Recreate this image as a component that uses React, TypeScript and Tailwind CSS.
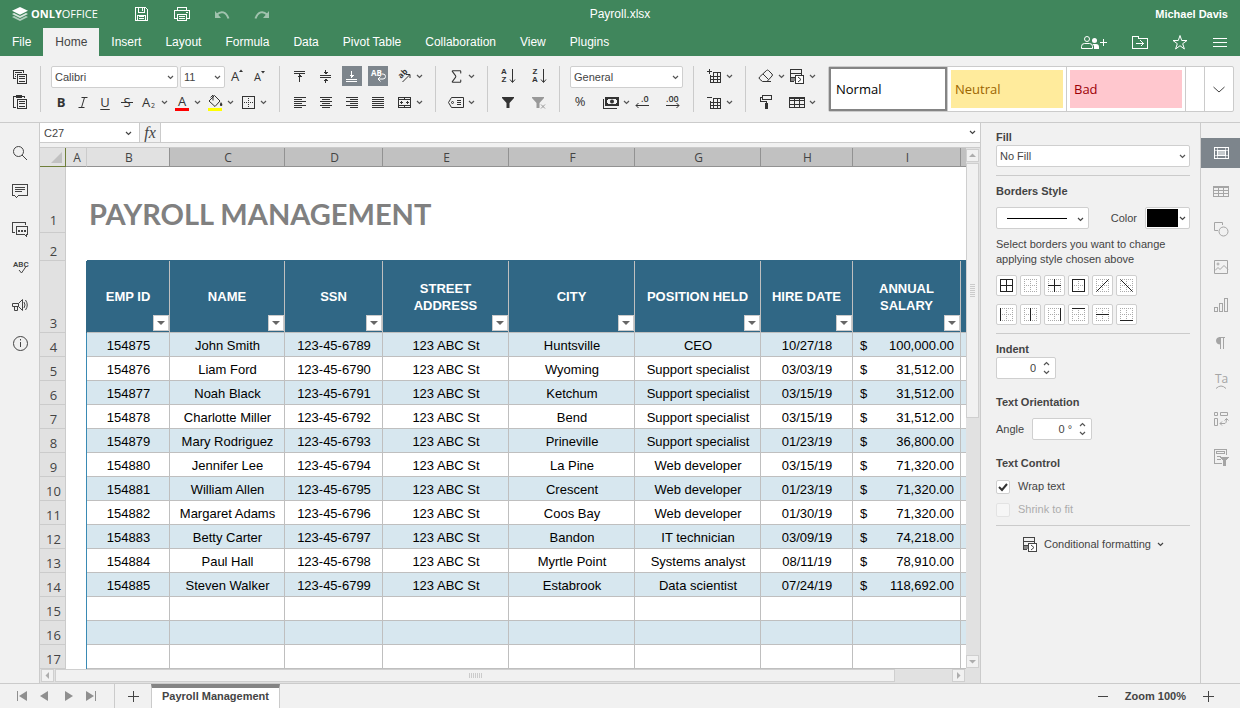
import React, { useState } from 'react';
import { Sigma } from 'lucide-react';
import { clsx } from 'clsx';

const columns = [
  { letter: 'A', width: 'w-[21px]', selected: false },
  { letter: 'B', width: 'w-[83px]', selected: false },
  { letter: 'C', width: 'w-[115px]', selected: true },
  { letter: 'D', width: 'w-[98px]', selected: true },
  { letter: 'E', width: 'w-[126px]', selected: true },
  { letter: 'F', width: 'w-[126px]', selected: true },
  { letter: 'G', width: 'w-[126px]', selected: true },
  { letter: 'H', width: 'w-[92px]', selected: true },
  { letter: 'I', width: 'w-[108px]', selected: true },
  { letter: '', width: '', selected: true },
];

const headings = [
  'EMP ID', 'NAME', 'SSN', 'STREET ADDRESS', 'CITY', 'POSITION HELD', 'HIRE DATE', 'ANNUAL SALARY',
];

const employees = [
  ['154875', 'John Smith', '123-45-6789', '123 ABC St', 'Huntsville', 'CEO', '10/27/18', '100,000.00'],
  ['154876', 'Liam Ford', '123-45-6790', '123 ABC St', 'Wyoming', 'Support specialist', '03/03/19', '31,512.00'],
  ['154877', 'Noah Black', '123-45-6791', '123 ABC St', 'Ketchum', 'Support specialist', '03/15/19', '31,512.00'],
  ['154878', 'Charlotte Miller', '123-45-6792', '123 ABC St', 'Bend', 'Support specialist', '03/15/19', '31,512.00'],
  ['154879', 'Mary Rodriguez', '123-45-6793', '123 ABC St', 'Prineville', 'Support specialist', '01/23/19', '36,800.00'],
  ['154880', 'Jennifer Lee', '123-45-6794', '123 ABC St', 'La Pine', 'Web developer', '03/15/19', '71,320.00'],
  ['154881', 'William Allen', '123-45-6795', '123 ABC St', 'Crescent', 'Web developer', '01/23/19', '71,320.00'],
  ['154882', 'Margaret Adams', '123-45-6796', '123 ABC St', 'Coos Bay', 'Web developer', '01/30/19', '71,320.00'],
  ['154883', 'Betty Carter', '123-45-6797', '123 ABC St', 'Bandon', 'IT technician', '03/09/19', '74,218.00'],
  ['154884', 'Paul Hall', '123-45-6798', '123 ABC St', 'Myrtle Point', 'Systems analyst', '08/11/19', '78,910.00'],
  ['154885', 'Steven Walker', '123-45-6799', '123 ABC St', 'Estabrook', 'Data scientist', '07/24/19', '118,692.00'],
  [], [], [],
];

const tabs = [
  'File', 'Home', 'Insert', 'Layout', 'Formula', 'Data', 'Pivot Table', 'Collaboration', 'View', 'Plugins',
];

interface IconProps {
  children: React.ReactNode;
  smooth?: boolean;
  className?: string;
}

// 20x20 line icon, strokes sit on half pixels
const Icon: React.FC<IconProps> = ({ children, smooth, className }) => (
  <svg
    viewBox="0 0 20 20"
    fill="none"
    stroke="currentColor"
    shapeRendering={smooth ? 'auto' : 'crispEdges'}
    className={clsx('w-5 h-5 shrink-0', className)}
    aria-hidden="true"
  >
    {children}
  </svg>
);

const Caret: React.FC<{ className?: string }> = ({ className }) => (
  <svg viewBox="0 0 7 5" fill="none" stroke="currentColor" className={clsx('w-[7px] h-[5px] shrink-0 pointer-events-none', className)} aria-hidden="true">
    <path d="M1 1l2.5 2.5L6 1" strokeWidth="1.2" />
  </svg>
);

interface ToolProps {
  label: string;
  children: React.ReactNode;
  active?: boolean;
  menu?: boolean;
}

const Tool: React.FC<ToolProps> = ({ label, children, active, menu }) => (
  <button
    aria-label={label}
    className={clsx('flex items-center shrink-0 h-5', active ? 'bg-[#7d858c] text-white' : 'text-[#333]')}
  >
    <span className="w-5 h-5 flex items-center justify-center">{children}</span>
    {menu && <span className="w-[11px] flex justify-center text-[#555]"><Caret /></span>}
  </button>
);

const Group: React.FC<{ children: React.ReactNode; last?: boolean }> = ({ children, last }) => (
  <div className={clsx('flex flex-col justify-between px-[10px] shrink-0', !last && 'border-r border-[#cbcbcb]')}>
    {children}
  </div>
);

interface ComboProps {
  label: string;
  id?: string;
  options: string[];
  className?: string;
}

const Combo: React.FC<ComboProps> = ({ label, id, options, className }) => (
  <div className={clsx('relative h-[22px]', className)}>
    <select
      id={id}
      aria-label={label}
      className="appearance-none block w-full h-full bg-white border border-[#cfcfcf] rounded-[2px] pl-[3px] pr-4 text-[11px] text-[#444] outline-none"
    >
      {options.map(option => <option key={option}>{option}</option>)}
    </select>
    <Caret className="absolute right-1 top-[9px] text-[#555]" />
  </div>
);

const Spinner: React.FC<{ id: string; value: string }> = ({ id, value }) => (
  <div className="flex w-[60px] h-[22px] bg-white border border-[#cfcfcf] rounded-[2px]">
    <input id={id} defaultValue={value} className="w-10 pr-px text-right text-[11px] outline-none" />
    <div className="flex flex-col justify-between flex-1 items-center py-[3px] text-[#555]">
      <button aria-label="Increase" className="h-[5px] flex"><Caret className="rotate-180" /></button>
      <button aria-label="Decrease" className="h-[5px] flex"><Caret /></button>
    </div>
  </div>
);

const CopyIcon = () => (
  <Icon>
    <path d="M6 12.5H3.5v-8h10V7M5 6.5h7M5 8.5h1M5 10.5h1M7.5 8.5h9v9h-9zM9 10.5h6M9 12.5h6M9 15.5h6" />
  </Icon>
);

const PasteIcon = () => (
  <Icon>
    <path d="M6 15.5H3.5v-11H6M12 4.5h2.5V6M7.5 7.5h9v9h-9zM9 9.5h6M9 11.5h6M9 14.5h6" />
    <path d="M6 3h6v3H6z" fill="currentColor" stroke="none" />
  </Icon>
);

const FillIcon = () => (
  <Icon smooth>
    <path d="M9.5 3.5L15 9l-5 5.5L4 9zM8 8.5V3L5.5 5.5" />
    <path d="M16 10c2 2.5 1.5 4 0 4s-1.5-2 0-4z" fill="currentColor" stroke="none" />
    <path d="M3 16h14v3H3z" fill="#ff0" stroke="none" />
  </Icon>
);

const CellsIcon: React.FC<{ plus?: boolean }> = ({ plus }) => (
  <Icon>
    <path d={plus ? 'M3 5.5h5M5.5 3v5' : 'M3 5.5h5'} />
    <path d="M6.5 9v7.5h10v-10H9M6 10.5h11M6 13.5h11M9.5 6v11M13.5 6v11" />
  </Icon>
);

const ConditionalIcon = () => (
  <Icon>
    <path d="M7 15.5H3.5v-12h11V9M3 7.5h12M3 11.5h5" />
    <path d="M4 12h4v3H4z" fill="#888" stroke="none" />
    <path d="M8.5 9.5h8v8h-8z" fill="#fff" />
    <path d="M11 11l3 2.5L11 16" shapeRendering="auto" />
  </Icon>
);

const SortIcon: React.FC<{ top: string; bottom: string }> = ({ top, bottom }) => (
  <span className="flex items-center w-5 h-5">
    <span className="flex flex-col w-[9px] pl-[3px] text-[8px] leading-2 font-bold">
      <span>{top}</span>
      <span>{bottom}</span>
    </span>
    <svg viewBox="0 0 8 16" fill="none" stroke="currentColor" className="w-2 h-4 ml-px" aria-hidden="true">
      <path d="M4.5 1v13M2 11.5l2.5 3 2.5-3" />
    </svg>
  </span>
);

const Toolbar = () => (
  <div className="flex shrink-0 bg-[#f1f1f1] border-b border-[#cbcbcb] pt-[10px] pb-[10px] pr-[6px] h-[67px] overflow-hidden">
    <Group>
      <Tool label="Copy"><CopyIcon /></Tool>
      <Tool label="Paste"><PasteIcon /></Tool>
    </Group>

    <Group>
      <div className="flex">
        <Combo label="Font" options={['Calibri', 'Arial']} className="w-[127px] mr-[2px]" />
        <Combo label="Font size" options={['11', '12', '14']} className="w-[45px]" />
        <div className="flex gap-[3px] pl-px">
          <Tool label="Increase font size">
            <Icon smooth>
              <text x="5" y="15" fontSize="13" fill="currentColor" stroke="none" className="font-['Open_Sans',sans-serif]">A</text>
              <path d="M13 6l2-2.5L17 6z" fill="currentColor" stroke="none" />
            </Icon>
          </Tool>
          <Tool label="Decrease font size">
            <Icon smooth>
              <text x="5" y="15" fontSize="11" fill="currentColor" stroke="none" className="font-['Open_Sans',sans-serif]">A</text>
              <path d="M12 5l2 2.5L16 5z" fill="currentColor" stroke="none" />
            </Icon>
          </Tool>
        </div>
      </div>
      <div className="flex gap-[2px] font-['Open_Sans',sans-serif] text-[13px] leading-5">
        <Tool label="Bold"><b>B</b></Tool>
        <Tool label="Italic">
          <Icon smooth><path d="M8.5 5.5h6M5.5 15.5h6M11.5 5.5l-3 10" /></Icon>
        </Tool>
        <Tool label="Underline"><u className="underline-offset-2">U</u></Tool>
        <Tool label="Strikethrough">
          <Icon smooth>
            <text x="10" y="15" textAnchor="middle" fontSize="13" fill="currentColor" stroke="none">S</text>
            <path d="M4 10.5h12" />
          </Icon>
        </Tool>
        <Tool label="Subscript" menu>
          <Icon smooth>
            <text x="3" y="15" fontSize="13" fill="currentColor" stroke="none">A</text>
            <text x="12" y="16" fontSize="7" fill="currentColor" stroke="none">2</text>
          </Icon>
        </Tool>
        <Tool label="Font color" menu>
          <Icon smooth>
            <text x="10" y="14" textAnchor="middle" fontSize="13" fill="currentColor" stroke="none">A</text>
            <path d="M3 16h14v3H3z" fill="red" stroke="none" />
          </Icon>
        </Tool>
        <Tool label="Fill color" menu><FillIcon /></Tool>
        <Tool label="Borders" menu>
          <Icon>
            <path d="M4.5 4.5h12v12h-12z" />
            <path d="M10.5 6v10M6 10.5h10" strokeDasharray="1 1" />
          </Icon>
        </Tool>
      </div>
    </Group>

    <Group>
      <div className="flex gap-[6px]">
        <Tool label="Align top"><Icon><path d="M4 5.5h11M4 7.5h11M9.5 8v8M7.5 10.5h4M8.5 9.5h2" /></Icon></Tool>
        <Tool label="Align middle">
          <Icon><path d="M4 9.5h11M4 11.5h11M9.5 4v4M9.5 13v4M7.5 6.5h4M8.5 7.5h2M7.5 14.5h4M8.5 13.5h2" /></Icon>
        </Tool>
        <Tool label="Align bottom" active>
          <Icon><path d="M4 13.5h11M4 15.5h11M9.5 5v7M7.5 9.5h4M8.5 10.5h2" /></Icon>
        </Tool>
        <Tool label="Wrap text" active>
          <Icon smooth>
            <text x="3" y="10" fontSize="8" fontWeight="700" fill="currentColor" stroke="none" className="font-['Open_Sans',sans-serif]">AB</text>
            <path d="M14 8h1q2.5 0 2.5 2.5T15 13h-5M12.5 10.5L10 13l2.5 2.5" />
          </Icon>
        </Tool>
        <Tool label="Orientation" menu>
          <Icon smooth>
            <text x="0" y="0" transform="translate(7 13) rotate(-45)" fontSize="8" fontWeight="700" fill="currentColor" stroke="none" className="font-['Open_Sans',sans-serif]">ab</text>
            <path d="M8.5 16l7-7M12 8.5h4V12" />
          </Icon>
        </Tool>
      </div>
      <div className="flex gap-[6px]">
        <Tool label="Align left"><Icon><path d="M4 5.5h12M4 7.5h8M4 9.5h12M4 11.5h8M4 13.5h12M4 15.5h8" /></Icon></Tool>
        <Tool label="Align center"><Icon><path d="M4 5.5h12M6 7.5h8M4 9.5h12M6 11.5h8M4 13.5h12M6 15.5h8" /></Icon></Tool>
        <Tool label="Align right"><Icon><path d="M4 5.5h12M8 7.5h8M4 9.5h12M8 11.5h8M4 13.5h12M8 15.5h8" /></Icon></Tool>
        <Tool label="Justify"><Icon><path d="M4 5.5h12M4 7.5h12M4 9.5h12M4 11.5h12M4 13.5h12M4 15.5h12" /></Icon></Tool>
        <Tool label="Merge" menu>
          <Icon>
            <path d="M4.5 5.5h12v10h-12zM4 7.5h13M4 13.5h13M10.5 5v3M10.5 13v3M6 10.5h3M12 10.5h3M7.5 9v3M13.5 9v3" />
          </Icon>
        </Tool>
      </div>
    </Group>

    <Group>
      <Tool label="Sum" menu><Sigma size={17} strokeWidth={1.5} /></Tool>
      <Tool label="Named ranges" menu>
        <Icon smooth>
          <path d="M5.5 5.5h12v10h-12l-3-5z" />
          <circle cx="6.5" cy="10.5" r="1" />
          <path d="M11 8.5h4M11 10.5h4M11 12.5h4" />
        </Icon>
      </Tool>
    </Group>

    <Group>
      <div className="flex gap-[11px]">
        <Tool label="Sort ascending"><SortIcon top="A" bottom="Z" /></Tool>
        <Tool label="Sort descending"><SortIcon top="Z" bottom="A" /></Tool>
      </div>
      <div className="flex gap-[11px]">
        <Tool label="Filter"><Icon smooth><path d="M4 5h12v1l-4.500 5v5h-3v-5L4 6z" fill="currentColor" stroke="none" /></Icon></Tool>
        <Tool label="Clear filter">
          <Icon smooth className="text-[#999]">
            <path d="M3 5h12v1l-4.500 5v5h-3v-5L3 6z" fill="currentColor" stroke="none" />
            <path d="M12 12.5l4 4M16 12.5l-4 4" />
          </Icon>
        </Tool>
      </div>
    </Group>

    <Group>
      <Combo label="Number format" options={['General', 'Number', 'Date']} className="w-[113px]" />
      <div className="flex justify-between font-['Open_Sans',sans-serif]">
        <Tool label="Percent"><span className="text-[13px]">%</span></Tool>
        <div className="flex">
          <Tool label="Currency" menu>
            <Icon>
              <path d="M2.5 7v9.5H16" />
              <path d="M4 5h14v9H4z" fill="currentColor" stroke="none" />
              <path d="M7 7h8v1h1v3h-1v1H7v-1H6V8h1z" fill="#f1f1f1" stroke="none" />
              <circle cx="11" cy="9.5" r="2" fill="currentColor" stroke="none" shapeRendering="auto" />
            </Icon>
          </Tool>
          <Tool label="Decrease decimal">
            <Icon smooth>
              <text x="9" y="10" fontSize="9" fontWeight="600" fill="currentColor" stroke="none">.0</text>
              <path d="M4 13.5h13M6.5 11L4 13.5 6.5 16" />
            </Icon>
          </Tool>
        </div>
        <Tool label="Increase decimal">
          <Icon smooth>
            <text x="3" y="10" fontSize="9" fontWeight="600" fill="currentColor" stroke="none">.00</text>
            <path d="M3 13.5h13M13.5 11l2.5 2.5-2.5 2.5" />
          </Icon>
        </Tool>
      </div>
    </Group>

    <Group>
      <Tool label="Insert cells" menu><CellsIcon plus /></Tool>
      <Tool label="Delete cells" menu><CellsIcon /></Tool>
    </Group>

    <Group last>
      <div className="flex">
        <Tool label="Clear" menu>
          <Icon smooth>
            <path d="M3.5 11l7-6.5q1-1 2 0L16 8q1 1 0 2l-5 5.5H6.5L3.5 13q-.8-1 0-2zM7 8l5.5 5.5M10 15.5h5" />
          </Icon>
        </Tool>
        <Tool label="Conditional formatting" menu><ConditionalIcon /></Tool>
      </div>
      <div className="flex gap-[11px]">
        <Tool label="Copy style">
          <Icon>
            <path d="M6.5 3.5h9v4h-9zM6 5.5H4.5v4h6V12" />
            <path d="M9 11h3v6H9z" fill="currentColor" stroke="none" />
          </Icon>
        </Tool>
        <Tool label="Format as table" menu>
          <Icon>
            <path d="M2.5 5.5h15v10h-15zM2 8.5h16M2 12.5h16M7.5 5v11M12.5 5v11" />
            <path d="M2 5h16v2H2z" fill="currentColor" stroke="none" />
          </Icon>
        </Tool>
      </div>
    </Group>

    <div className="flex flex-1 bg-white border border-[#cbcbcb] rounded-[2px] font-['Open_Sans',sans-serif] text-[13px]">
      <button className="w-[118px] shrink-0 border-2 border-[#848484] text-left pl-[5px] pt-px text-black">Normal</button>
      <div className="w-[120px] shrink-0 border-x border-[#cbcbcb] p-[3px]">
        <button className="w-full h-full bg-[#ffeb9c] text-[#9c6500] text-left pl-1 pt-px">Neutral</button>
      </div>
      <div className="w-[119px] shrink-0 border-r border-[#cbcbcb] p-[3px]">
        <button className="w-full h-full bg-[#ffc7ce] text-[#9c0006] text-left pl-1 pt-px">Bad</button>
      </div>
      <div className="flex-1" />
      <button aria-label="More styles" className="w-[29px] shrink-0 border-l border-[#cbcbcb] flex items-center justify-center text-[#444]">
        <Icon smooth><path d="M4.5 8l5.5 5 5.5-5" /></Icon>
      </button>
    </div>
  </div>
);

const Header: React.FC = () => {
  const [active, setActive] = useState('Home');

  return (
    <header className="bg-[#40865c] text-white text-xs shrink-0">
      <div className="relative flex items-center justify-between h-7 px-3">
        <div className="flex items-center">
          <svg viewBox="0 0 16 14" className="w-4 h-[14px]" aria-hidden="true">
            <path d="M0 10l2-1 6 3 6-3 2 1-8 4z" fill="#fff" opacity=".6" />
            <path d="M0 7l2-1 6 3 6-3 2 1-8 4z" fill="#fff" opacity=".8" />
            <path d="M8 0l8 3.8-8 3.9L0 3.8z" fill="#fff" />
          </svg>
          <span className="ml-[3px] w-[69px] font-['Open_Sans',sans-serif] text-[11px]"><b>ONLY</b>OFFICE</span>
          <div className="flex gap-5 pl-[31px]">
            <button aria-label="Save">
              <Icon><path d="M4.5 3.5h10l2 2v11h-12zM7.5 4v4h6V4M11.5 4v3M6.5 16v-5h8v5M8 12.5h5M8 14.5h5" /></Icon>
            </button>
            <button aria-label="Print">
              <Icon><path d="M7 14.5H3.5v-8h15v8H15M6.5 6V3.5h9V6M6.5 10.5h9v6h-9zM8 12.5h6M8 14.5h6M15 8.5h2" /></Icon>
            </button>
            <button aria-label="Undo" className="opacity-50">
              <Icon smooth><path d="M6 10.5c4-4 9-3 11.5 4" strokeWidth="2" /><path d="M4 7v7h6z" fill="currentColor" stroke="none" /></Icon>
            </button>
            <button aria-label="Redo" className="opacity-50">
              <Icon smooth><path d="M16 10.5c-4-4-9-3-11.5 4" strokeWidth="2" /><path d="M18 7v7h-6z" fill="currentColor" stroke="none" /></Icon>
            </button>
          </div>
        </div>
        <span className="absolute left-1/2 -translate-x-1/2">Payroll.xlsx</span>
        <span className="text-[11px] font-bold">Michael Davis</span>
      </div>

      <div className="flex justify-between h-7">
        <nav className="flex">
          {tabs.map(tab => (
            <button
              key={tab}
              onClick={() => setActive(tab)}
              className={clsx('px-3', tab === active && 'bg-[#f1f1f1] text-[#444]')}
            >
              {tab}
            </button>
          ))}
        </nav>
        <div className="flex items-center gap-5 pr-[10px]">
          <button aria-label="Manage access">
            <svg viewBox="0 0 28 20" fill="none" stroke="currentColor" className="w-7 h-5 mr-[2px]" aria-hidden="true">
              <circle cx="7" cy="7" r="2.5" />
              <path d="M1.5 16.5v-2q0-3 3-3h5q3 0 3 3v2z" />
              <circle cx="14.5" cy="8.5" r="2.5" fill="currentColor" stroke="none" />
              <path d="M14 17v-3l-1.5-2H16q3 0 3 3v2z" fill="currentColor" stroke="none" />
              <path d="M20 10.5h7M23.5 7v7" />
            </svg>
          </button>
          <button aria-label="Open file location">
            <Icon><path d="M2.5 16.5v-12h6v2h9v10zM6 11.5h7M10.5 8.5l3 3-3 3" /></Icon>
          </button>
          <button aria-label="Mark as favorite">
            <Icon smooth><path d="M10 3.5l1.7 5H17l-4.300 3.200 1.700 5.300-4.400-3.300L5.600 17l1.700-5.300L3 8.500h5.300z" /></Icon>
          </button>
          <button aria-label="View settings">
            <Icon><path d="M3 6.5h14M3 10.5h14M3 14.5h14" /></Icon>
          </button>
        </div>
      </div>
    </header>
  );
};

const leftTools = [
  { label: 'Search', icon: <Icon smooth><circle cx="8.5" cy="8.5" r="5" /><path d="M12 12l5 5" /></Icon> },
  { label: 'Comments', icon: <Icon><path d="M2.5 3.5h15v11h-9l-2 2-2-2h-2zM5 6.5h10M5 8.5h10M5 10.5h7" /></Icon> },
  {
    label: 'Chat',
    icon: (
      <Icon>
        <path d="M5 13.5H2.5v-10h13V6M6.5 7.5h11v8h-1v2l-2-2h-8z" />
        <path d="M8 11h2v2H8zM11 11h2v2h-2zM14 11h2v2h-2z" fill="currentColor" stroke="none" />
      </Icon>
    ),
  },
  {
    label: 'Spell checking',
    icon: (
      <Icon smooth>
        <text x="3" y="10" fontSize="8" fontWeight="600" fill="currentColor" stroke="none" className="font-['Roboto',sans-serif]">ABC</text>
        <path d="M9 13l2.5 3L16 9.5" />
      </Icon>
    ),
  },
  { label: 'Feedback', icon: <Icon smooth><path d="M2.5 8.5h6l4-4v11l-4-4h-6zM4.5 12v3.5h3V12M8.5 8.5v3M14 7q2 3 0 6M15.5 5q3.5 5 0 10" /></Icon> },
  { label: 'About', icon: <Icon smooth><circle cx="10.5" cy="10.5" r="7" /><path d="M10.5 9v5M10.5 6v1.5" /></Icon> },
];

const rightTools = [
  {
    label: 'Cell settings',
    icon: (
      <Icon>
        <path d="M3.5 4.5h14v11h-14zM6.5 4v12M14.5 4v12M3 7.5h15M3 12.5h15" opacity=".6" />
        <path d="M3.5 4.5h14v11h-14zM6.5 7.5h8v5h-8z" />
        <path d="M7 8h7v4H7z" fill="#c5cacd" stroke="none" />
      </Icon>
    ),
  },
  { label: 'Table settings', icon: <Icon><path d="M2.5 5.5h15v10h-15zM2 6.5h16M2 9.5h16M2 12.5h16M7.5 6v10M12.5 6v10" /></Icon> },
  { label: 'Shape settings', icon: <Icon smooth><path d="M7 11.5H3.5v-8h8V6" /><circle cx="12.5" cy="12.5" r="4.5" /></Icon> },
  { label: 'Image settings', icon: <Icon smooth><path d="M3.5 3.5h13v13h-13zM4 13.5l3-3 2 2 4-4 4 4" /><circle cx="7" cy="7" r="1" /></Icon> },
  { label: 'Chart settings', icon: <Icon><path d="M3.5 12.5h3v4h-3zM8.5 8.5h3v8h-3zM13.5 3.5h3v13h-3z" /></Icon> },
  {
    label: 'Paragraph settings',
    icon: (
      <Icon smooth>
        <path d="M9.5 4v7.5q-4.5 0-4.5-3.7T9.5 4z" fill="currentColor" stroke="none" />
        <path d="M8 4.5h6M9.5 4v12M12.5 4v12" />
      </Icon>
    ),
  },
  {
    label: 'Text Art settings',
    icon: (
      <Icon smooth>
        <text x="4" y="12" fontSize="12" fill="currentColor" stroke="none" className="font-['Open_Sans',sans-serif]">Ta</text>
        <path d="M5 17.5q5-5 10 0" />
      </Icon>
    ),
  },
  {
    label: 'Pivot table settings',
    icon: <Icon smooth><path d="M3.5 3.5h3v3h-3zM9.5 3.5h7v3h-7zM3.5 9.5h3v7h-3zM9 14.5h5q1.5 0 1.5-5M13.5 11.5l2-2 2 2M11 12.5l-2 2 2 2" /></Icon>,
  },
  {
    label: 'Slicer settings',
    icon: (
      <Icon>
        <path d="M11 16.5H3.5v-14h12V8M5.5 4.5h8v2h-8zM6 9.5h4M6 12.5h4" />
        <path d="M9 10h9l-3 4v5h-3v-5z" fill="currentColor" stroke="none" />
      </Icon>
    ),
  },
];

const FormulaBar = () => (
  <div className="flex h-5 shrink-0 bg-white border-b border-[#cbcbcb] text-[#444]">
    <div className="relative w-[100px] shrink-0 border-r border-[#cbcbcb]">
      <input aria-label="Name box" defaultValue="C27" className="block w-full h-full pl-1 text-[11px] outline-none" />
      <Caret className="absolute right-[7px] top-2" />
    </div>
    <button aria-label="Insert function" className="w-[21px] shrink-0 bg-[#f1f1f1] border-r border-[#cbcbcb] font-['Liberation_Serif',serif] italic text-base leading-[18px]">
      fx
    </button>
    <input aria-label="Formula" className="flex-1 min-w-0 px-1 text-[11px] outline-none" />
    <button aria-label="Expand formula bar" className="w-4 flex items-center justify-center"><Caret /></button>
  </div>
);

const RowNumber: React.FC<{ n: number; className?: string }> = ({ n, className }) => (
  <th
    scope="row"
    className={clsx(
      "bg-[#e1e1e1] border-r border-b border-[#cbcbcb] p-0 pl-[2px] align-bottom text-center font-normal text-[#444] text-[13px] leading-[18px] font-['Open_Sans',sans-serif]",
      className
    )}
  >
    {n}
  </th>
);

const Sheet = () => (
  <div className="flex-1 min-w-0 overflow-hidden bg-white">
    <table className="table-fixed w-full border-separate border-spacing-0 text-[13px] text-black">
      <colgroup>
        <col className="w-[26px]" />
        {columns.map((column, i) => <col key={i} className={column.width} />)}
      </colgroup>
      <thead>
        <tr className="h-[19px]">
          <td className="p-0 bg-[#e1e1e1] border-r border-b border-[#6f7f3a]">
            <svg viewBox="0 0 25 18" className="block w-[25px] h-[18px]" aria-hidden="true">
              <path d="M22 4v11H11z" fill="#c1c1c1" />
            </svg>
          </td>
          {columns.map((column, i) => (
            <th
              key={i}
              scope="col"
              className={clsx(
                "p-0 pl-[2px] pt-[2px] border-b border-b-[#929292] border-r font-normal text-xs leading-4 text-[#444] font-['Open_Sans',sans-serif]",
                column.selected ? 'bg-[#c1c1c1]' : 'bg-[#e1e1e1]',
                column.letter === 'A' ? 'border-r-[#cbcbcb]' : 'border-r-[#929292]',
                !column.letter && 'border-r-0'
              )}
            >
              {column.letter}
            </th>
          ))}
        </tr>
      </thead>
      <tbody>
        <tr className="h-[66px]">
          <RowNumber n={1} className="pb-[3px]" />
          <td />
          <td colSpan={9} className="p-0 pl-[2px] align-bottom text-[#808080] font-bold font-['Lato',sans-serif] text-[29px] leading-[38px] whitespace-nowrap">
            PAYROLL MANAGEMENT
          </td>
        </tr>
        <tr className="h-7">
          <RowNumber n={2} />
          <td />
          <td colSpan={9} className="border-b border-[#306785]" />
        </tr>
        <tr className="h-[72px]">
          <RowNumber n={3} />
          <td className="border-r border-[#306785]" />
          {headings.map(heading => (
            <th
              key={heading}
              scope="col"
              className="relative px-2 py-0 bg-[#306785] border-r border-b border-[#bfbfbf] text-white font-bold text-[13px] leading-[17px]"
            >
              {heading}
              <button
                aria-label={`Filter ${heading}`}
                className="absolute right-0 bottom-px w-4 h-4 bg-white border border-[#cbcbcb] flex items-center justify-center"
              >
                <svg viewBox="0 0 8 4" className="w-2 h-1" aria-hidden="true"><path d="M0 0h8L4 4z" fill="#666" /></svg>
              </button>
            </th>
          ))}
          <td className="bg-[#306785] border-b border-[#bfbfbf]" />
        </tr>
        {employees.map((employee, row) => (
          <tr key={row} className={clsx('h-6', row % 2 === 0 ? 'bg-[#d7e7ef]' : 'bg-white')}>
            <RowNumber n={row + 4} />
            <td className="bg-white border-r border-[#3a8ab4]" />
            {headings.map((heading, i) => (
              <td key={heading} className="p-0 pl-px pt-[2px] border-r border-b border-[#bfbfbf] text-center whitespace-nowrap leading-5">
                {i === 7 && employee[i] ? (
                  <div className="flex justify-between px-[6px]">
                    <span>$</span>
                    <span>{employee[i]}</span>
                  </div>
                ) : employee[i]}
              </td>
            ))}
            <td className="border-b border-[#bfbfbf]" />
          </tr>
        ))}
      </tbody>
    </table>
  </div>
);

const ScrollArrow: React.FC<{ label: string; d: string }> = ({ label, d }) => (
  <button aria-label={label} className="w-[13px] h-[13px] shrink-0 bg-[#f1f1f1] border border-[#cfcfcf]">
    <svg viewBox="0 0 11 11" className="block w-[11px] h-[11px]" aria-hidden="true"><path d={d} fill="#adadad" /></svg>
  </button>
);

const BORDER_LINES = [
  'M3.5 3.5h12v12h-12zM9.5 3v13M3 9.5h13',
  '',
  'M9.5 3v13M3 9.5h13',
  'M3.5 3.5h12v12h-12z',
  'M3.5 15.5l12-12',
  'M3.5 3.5l12 12',
  'M3.5 3v13',
  'M9.5 3v13',
  'M15.5 3v13',
  'M3 3.5h13',
  'M3 9.5h13',
  'M3 15.5h13',
];

const BORDER_NAMES = [
  'All borders', 'No borders', 'Inner borders', 'Outer borders', 'Diagonal up', 'Diagonal down',
  'Left border', 'Inner vertical', 'Right border', 'Top border', 'Inner horizontal', 'Bottom border',
];

const CellSettings = () => (
  <aside className="w-[220px] shrink-0 border-l border-[#cbcbcb] pl-[15px] pr-[10px] pt-[7px] text-[11px] leading-[15px] text-[#444]">
    <label htmlFor="fill" className="block font-bold">Fill</label>
    <Combo label="Fill" id="fill" options={['No Fill', 'Color Fill', 'Gradient Fill', 'Pattern']} />
    <hr className="border-[#cbcbcb] mt-2" />

    <h3 className="font-bold mt-2">Borders Style</h3>
    <div className="flex items-center mt-2">
      <button aria-label="Border style" className="relative w-[93px] h-[22px] bg-white border border-[#cfcfcf] rounded-[2px]">
        <span className="block w-[60px] h-px bg-black ml-[10px]" />
        <Caret className="absolute right-1 top-[9px]" />
      </button>
      <span className="ml-auto">Color</span>
      <button aria-label="Border color" className="flex items-center w-[45px] h-[22px] ml-2 p-px bg-white border border-[#cfcfcf] rounded-[2px]">
        <span className="w-[31px] h-[18px] bg-black mr-px" />
        <Caret />
      </button>
    </div>

    <p className="mt-2 whitespace-nowrap">Select borders you want to change<br />applying style chosen above</p>
    <div className="grid grid-cols-[repeat(6,21px)] gap-x-[3px] gap-y-2 mt-2">
      {BORDER_LINES.map((d, i) => (
        <button key={i} aria-label={BORDER_NAMES[i]} className="w-[21px] h-[21px] bg-white border border-[#cfcfcf] rounded-[2px]">
          <svg viewBox="0 0 19 19" fill="none" className="block w-[19px] h-[19px]" shapeRendering="crispEdges" aria-hidden="true">
            <path d="M3.5 3v13M9.5 3v13M15.5 3v13M3 3.5h13M3 9.5h13M3 15.5h13" stroke="#aaa" strokeDasharray="1 1" />
            <path d={d} stroke="#222" shapeRendering={i === 4 || i === 5 ? 'auto' : 'crispEdges'} />
          </svg>
        </button>
      ))}
    </div>
    <hr className="border-[#cbcbcb] mt-2" />

    <label htmlFor="indent" className="block font-bold mt-2">Indent</label>
    <Spinner id="indent" value="0" />

    <h3 className="font-bold mt-4">Text Orientation</h3>
    <div className="flex items-center gap-2 mt-2">
      <label htmlFor="angle">Angle</label>
      <Spinner id="angle" value="0 °" />
    </div>

    <h3 className="font-bold mt-4">Text Control</h3>
    <label className="flex items-center gap-2 mt-2">
      <span className="relative w-[14px] h-[14px]">
        <input type="checkbox" defaultChecked className="peer appearance-none block w-[14px] h-[14px] bg-white border border-[#cfcfcf] rounded-[2px]" />
        <svg viewBox="0 0 14 14" fill="none" stroke="#333" strokeWidth="2" className="absolute inset-0 hidden peer-checked:block pointer-events-none" aria-hidden="true">
          <path d="M3 7l3 3 5-6" />
        </svg>
      </span>
      Wrap text
    </label>
    <label className="flex items-center gap-2 mt-2 opacity-40">
      <input type="checkbox" disabled className="appearance-none block w-[14px] h-[14px] bg-white border border-[#cfcfcf] rounded-[2px]" />
      Shrink to fit
    </label>
    <hr className="border-[#cbcbcb] mt-2" />

    <button className="flex items-center mx-auto mt-2 pr-[2px]">
      <ConditionalIcon />
      <span className="ml-1 mr-[6px]">Conditional formatting</span>
      <Caret />
    </button>
  </aside>
);

const StatusBar = () => (
  <footer className="flex items-stretch justify-between h-[25px] shrink-0 border-t border-[#cbcbcb] text-[11px] text-[#444]">
    <div className="flex">
      <div className="flex items-center w-[115px] gap-1 pl-3 border-r border-[#cbcbcb] text-[#8f8f8f]">
        <button aria-label="First sheet"><Icon><path d="M5.5 5v10" /><path d="M15 5v10l-8-5z" fill="currentColor" stroke="none" shapeRendering="auto" /></Icon></button>
        <button aria-label="Previous sheet"><Icon smooth><path d="M12 5v10l-8-5z" fill="currentColor" stroke="none" /></Icon></button>
        <button aria-label="Next sheet"><Icon smooth><path d="M5 5v10l8-5z" fill="currentColor" stroke="none" /></Icon></button>
        <button aria-label="Last sheet"><Icon><path d="M11.5 5v10" /><path d="M2 5v10l8-5z" fill="currentColor" stroke="none" shapeRendering="auto" /></Icon></button>
      </div>
      <button aria-label="Add sheet" className="w-9 flex items-center justify-center">
        <Icon><path d="M5 10.5h11M10.5 5v11" /></Icon>
      </button>
      <button className="px-[10px] pb-1 bg-white border-t-4 border-t-[#848484] border-x border-x-[#cbcbcb] font-bold">Payroll Management</button>
    </div>
    <div className="flex items-center pr-[22px] gap-3">
      <button aria-label="Zoom out"><Icon><path d="M5 10.5h10" /></Icon></button>
      <span className="font-bold">Zoom 100%</span>
      <button aria-label="Zoom in"><Icon><path d="M5 10.5h11M10.5 5v11" /></Icon></button>
    </div>
  </footer>
);

export default function App() {
  return (
    <div className="h-screen flex flex-col bg-[#f1f1f1] font-['Liberation_Sans',Arial,sans-serif] overflow-hidden">
      <Header />
      <Toolbar />

      <div className="flex flex-1 min-h-0">
        <nav className="w-10 shrink-0 flex flex-col items-center gap-2 pt-[15px] border-r border-[#cbcbcb] text-[#444]">
          {leftTools.map(tool => (
            <button key={tool.label} aria-label={tool.label} className="h-[30px] flex items-center">{tool.icon}</button>
          ))}
        </nav>

        <main className="flex flex-col flex-1 min-w-0">
          <FormulaBar />
          <div className="h-[5px] shrink-0 border-b border-[#cbcbcb]" />
          <div className="flex flex-1 min-h-0">
            <Sheet />
            <div className="w-[14px] shrink-0 flex flex-col py-px bg-[#e1e1e1]">
              <ScrollArrow label="Scroll up" d="M2 7h7L5.5 3.5z" />
              <div className="flex-1 min-h-0 py-px">
                <div className="flex flex-col items-center justify-center gap-px w-[13px] h-[52%] bg-[#f1f1f1] border border-[#cfcfcf]">
                  {[0, 1, 2, 3, 4, 5, 6].map(i => <span key={i} className="w-[5px] h-px bg-[#cbcbcb]" />)}
                </div>
              </div>
              <ScrollArrow label="Scroll down" d="M2 4h7L5.5 7.5z" />
            </div>
          </div>
          <div className="h-[14px] shrink-0 flex pl-px pr-[15px] bg-[#e1e1e1]">
            <ScrollArrow label="Scroll left" d="M7 2v7L3.5 5.5z" />
            <div className="flex-1 px-px">
              <div className="flex items-center justify-center gap-px w-15/16 h-[13px] bg-[#f1f1f1] border border-[#cfcfcf]">
                {[0, 1, 2, 3, 4, 5, 6].map(i => <span key={i} className="w-px h-[5px] bg-[#cbcbcb]" />)}
              </div>
            </div>
            <ScrollArrow label="Scroll right" d="M4 2v7l3.5-3.5z" />
          </div>
        </main>

        <CellSettings />

        <nav className="w-10 shrink-0 flex flex-col gap-2 pt-[15px] border-l border-[#cbcbcb]">
          {rightTools.map((tool, i) => (
            <button
              key={tool.label}
              aria-label={tool.label}
              className={clsx('h-[30px] flex items-center justify-center', i === 0 ? 'bg-[#7d858c] text-white' : 'text-[#a5a5a5]')}
            >
              {tool.icon}
            </button>
          ))}
        </nav>
      </div>

      <StatusBar />
    </div>
  );
}
